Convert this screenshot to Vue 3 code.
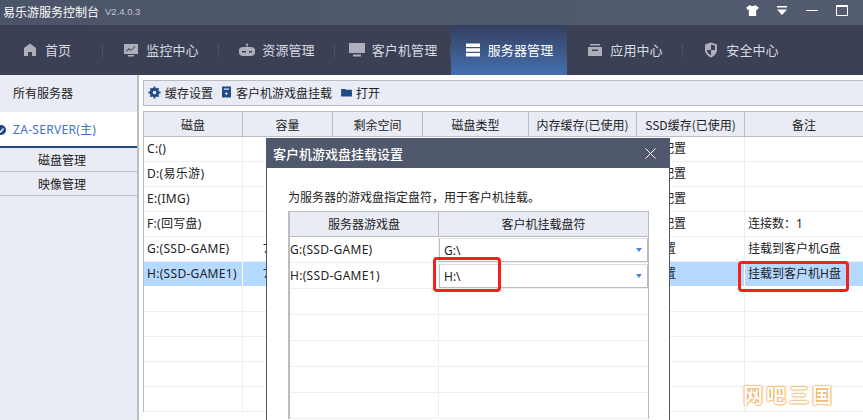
<script setup>
const nav = [
  { t: '首页', w: 103, i: 'home' },
  { t: '监控中心', w: 116, i: 'mon' },
  { t: '资源管理', w: 116, i: 'res' },
  { t: '客户机管理', w: 116, i: 'pc' },
  { t: '服务器管理', w: 116, i: 'srv', on: true },
  { t: '应用中心', w: 116, i: 'app' },
  { t: '安全中心', w: 116, i: 'sec' }
]
const cols = [
  { t: '磁盘', w: 99 }, { t: '容量', w: 90 }, { t: '剩余空间', w: 90 }, { t: '磁盘类型', w: 106 },
  { t: '内存缓存(已使用)', w: 108 }, { t: 'SSD缓存(已使用)', w: 108 }, { t: '备注', w: 119 }
]
const rows = [
  ['C:()', '', '', '', '', '未配置', ''],
  ['D:(易乐游)', '', '', '', '', '未配置', ''],
  ['E:(IMG)', '', '', '', '', '未配置', ''],
  ['F:(回写盘)', '', '', '', '', '未配置', '连接数：1'],
  ['G:(SSD-GAME)', '7', '', '', '', '未配置', '挂载到客户机G盘'],
  ['H:(SSD-GAME1)', '7', '', '', '', '未配置', '挂载到客户机H盘'],
  ['', '', '', '', '', '', ''], ['', '', '', '', '', '', ''], ['', '', '', '', '', '', ''],
  ['', '', '', '', '', '', ''], ['', '', '', '', '', '', '']
]
const mrows = [['G:(SSD-GAME)', 'G:\\'], ['H:(SSD-GAME1)', 'H:\\'], ['', ''], ['', ''], ['', ''], ['', ''], ['', '']]
</script>

<template>
  <div class="app">
    <header class="title">
      <span class="tname">易乐游服务控制台</span><span class="ver">V2.4.0.3</span>
      <div class="winbtns">
        <svg width="13" height="11" viewBox="0 0 14 12"><path d="M4 0 L5.500 1 H8.500 L10 0 L14 3 L12 5.500 L11 5 V12 H3 V5 L2 5.500 L0 3 Z" fill="#fff"/></svg>
        <svg width="10" height="9" viewBox="0 0 10 9"><path d="M0 0H10V1.500H0Z M0 3.500H10L5 9Z" fill="#fff"/></svg>
        <i class="min"></i>
        <i class="max"></i>
      </div>
    </header>
    <nav class="nav">
      <div v-for="n in nav" :key="n.t" class="navitem" :class="{ on: n.on }" :style="{ width: n.w + 'px' }">
        <svg class="nicon" width="16" height="16" viewBox="0 0 16 16">
          <path v-if="n.i === 'home'" d="M8 1.500 L14 6 V14 H10 V10 H6 V14 H2 V6 Z" fill="currentColor"/>
          <path v-else-if="n.i === 'mon'" fill-rule="evenodd" d="M1 2H15V12H1Z M3 9L6 6L8 8L12 4L12.500 4.500L8 9L6 7.500L4 9.500Z M5 13H11V14.500H5Z" fill="currentColor"/>
          <path v-else-if="n.i === 'res'" fill-rule="evenodd" d="M8 1.500A1 1 0 0 1 8.500 3.500V5H12A4 4 0 0 1 12 14H4A4 4 0 0 1 4 5H7.500V3.500A1 1 0 0 1 8 1.500Z M3 9V10.500H7V9Z M10 9V10.500H13V9Z" fill="currentColor"/>
          <path v-else-if="n.i === 'pc'" d="M0 1H16V11H0Z M4 12.500H12V14.500H4Z" fill="currentColor"/>
          <path v-else-if="n.i === 'srv'" d="M1 1.500H15V5H1Z M1 6.300H15V9.700H1Z M1 11H15V14.500H1Z" fill="currentColor"/>
          <path v-else-if="n.i === 'app'" fill-rule="evenodd" d="M3 2H13V3.500H3Z M1 5H15V14H1Z M5 7.500V9H11V7.500Z" fill="currentColor"/>
          <path v-else d="M8 0.500L14 2.500V8C14 11.500 11 14 8 15.500C5 14 2 11.500 2 8V2.500Z M8 2.500V8H12V3.800Z M8 8V13.300C6 12.300 4 10.500 4 8Z" fill="currentColor" fill-rule="evenodd"/>
        </svg>
        <span>{{ n.t }}</span>
      </div>
    </nav>
    <main class="main">
      <aside class="side">
        <div class="all">所有服务器</div>
        <div class="server">
          <svg class="dot" width="10" height="10" viewBox="0 0 10 10"><circle cx="5" cy="5" r="5" fill="#1f4a86"/><path d="M2.500 5L4.500 7L7.500 3.500" fill="none" stroke="#fff" stroke-width="1.200"/></svg>
          <span>ZA-SERVER(主)</span>
        </div>
        <div class="sub">磁盘管理</div>
        <div class="sub">映像管理</div>
      </aside>
      <section class="content">
        <div class="toolbar">
          <span class="tool">
            <svg width="13" height="13" viewBox="0 0 14 14"><circle cx="7" cy="7" r="3.500" fill="none" stroke="#1f4a86" stroke-width="3"/><path d="M7 0.500V3 M7 11V13.500 M0.500 7H3 M11 7H13.500 M2.500 2.500L4 4 M10 10L11.500 11.500 M11.500 2.500L10 4 M4 10L2.500 11.500" stroke="#1f4a86" stroke-width="2"/></svg>
            缓存设置
          </span>
          <span class="tool t2">
            <svg width="9" height="12" viewBox="0 0 10 12"><path fill-rule="evenodd" d="M0 0H10V12H0Z M2 2V3.500H8V2Z M4.300 6V7.300H3V8.300H4.300V9.600H5.300V8.300H6.600V7.300H5.300V6Z" fill="#1f4a86"/></svg>
            客户机游戏盘挂载
          </span>
          <span class="tool t3">
            <svg width="11" height="9" viewBox="0 0 12 10"><path d="M0 1H4.500L5.500 2H12V9.500H0Z" fill="#1f4a86"/></svg>
            打开
          </span>
        </div>
        <div class="table">
          <div class="thead">
            <div v-for="c in cols" :key="c.t" class="th" :style="{ width: c.w + 'px' }">{{ c.t }}</div>
          </div>
          <div v-for="(r, ri) in rows" :key="ri" class="tr" :class="{ sel: ri === 5 }">
            <div v-for="(c, ci) in cols" :key="ci" class="td" :class="{ first: ci === 0, num: ci === 1, cfg: ci === 5 && ri < 4, cfg2: ci === 5 && ri >= 4 }" :style="{ width: c.w + 'px' }">{{ r[ci] }}</div>
          </div>
        </div>
      </section>
    </main>

    <div class="modal">
      <div class="mtitle"><span>客户机游戏盘挂载设置</span>
        <svg width="11" height="11" viewBox="0 0 11 11"><path d="M0.500 0.500L10.500 10.500M10.500 0.500L0.500 10.500" stroke="#fff" stroke-width="1"/></svg>
      </div>
      <p class="desc">为服务器的游戏盘指定盘符，用于客户机挂载。</p>
      <div class="mtable">
        <div class="mhead"><div class="mc1">服务器游戏盘</div><div class="mc2">客户机挂载盘符</div></div>
        <div v-for="(m, i) in mrows" :key="i" class="mrow">
          <div class="mc1">{{ m[0] }}</div>
          <div class="mc2"><div v-if="m[1]" class="select"><span>{{ m[1] }}</span><i class="caret"></i></div></div>
        </div>
      </div>
    </div>

    <i class="red red1"></i>
    <i class="red red2"></i>
    <div class="mark">网吧三国</div>
  </div>
</template>

<style scoped>
.app { position: relative; width: 863px; height: 420px; overflow: hidden; background: #fff; font-family: "Noto Sans CJK SC", "Liberation Sans", sans-serif; font-size: 12px; color: #222; }
.title { height: 25px; display: flex; align-items: center; padding-left: 3px; color: #fff; background: linear-gradient(90deg, #4c5469, #525b70); }
.tname { font-size: 12px; margin-bottom: 2px; }
.ver { margin-left: 6px; margin-bottom: 2px; font-size: 9.500px; color: #c3c8d3; font-family: "Liberation Sans", sans-serif; }
.winbtns { margin-left: auto; display: flex; align-items: center; gap: 18px; padding-right: 15px; padding-bottom: 4px; }
.min { width: 12px; height: 1px; background: #fff; margin-left: 1px; }
.max { width: 12px; height: 11px; box-sizing: border-box; border: 1px solid #fff; border-top-width: 2px; }
.nav { height: 50px; display: flex; background: #3b4055; }
.navitem { position: relative; display: flex; align-items: center; justify-content: center; gap: 7px; color: #d9dbe2; font-size: 13px; letter-spacing: 0.100px; box-sizing: border-box; padding-bottom: 1px; }
.navitem:first-child { padding-right: 10px; }
.navitem + .navitem::before { content: ""; position: absolute; left: -1px; top: 19px; height: 14px; width: 1px; background: #4d5266; }
.navitem.on { color: #fff; background: linear-gradient(180deg, #353f5f, #4470ae); }
.nicon { color: #adb0ba; }
.on .nicon { color: #fff; }
.main { display: flex; height: 345px; }
.side { width: 137px; background: #e9ecf5; border-right: 2px solid #bbbcc4; flex: none; }
.all { height: 37px; box-sizing: border-box; padding: 0 0 2px 13px; display: flex; align-items: center; }
.server { height: 36px; box-sizing: border-box; display: flex; align-items: center; background: #fff; color: #3f73c9; border-bottom: 2px solid #1f4a86; padding-left: 13px; position: relative; font-family: "Noto Sans", "Noto Sans CJK SC", sans-serif; font-size: 12px; letter-spacing: 0.300px; }
.dot { position: absolute; left: -4px; top: 13px; }
.sub { height: 24px; box-sizing: border-box; border-bottom: 1px solid #bbbcc4; display: flex; align-items: center; padding-left: 38px; }
.content { flex: 1; padding: 5px 0 0 4px; min-width: 0; }
.toolbar { height: 26px; box-sizing: border-box; display: flex; align-items: center; background: #e9ecf5; border: 1px solid #bbbcc4; border-right: 0; padding: 0 0 2px 4px; }
.tool { display: inline-flex; align-items: center; gap: 4px; }
.t2 { margin-left: 9px; gap: 5px; }
.t3 { margin-left: 9px; gap: 4px; }
.table { margin-top: 5px; border-left: 1px solid #bbbcc4; }
.thead { display: flex; height: 26px; background: #e9ecf5; border-top: 1px solid #bbbcc4; border-bottom: 1px solid #bbbcc4; box-sizing: border-box; }
.th { box-sizing: border-box; border-right: 1px solid #bbbcc4; display: flex; align-items: center; justify-content: center; flex: none; }
.tr { display: flex; height: 25px; }
.td { box-sizing: border-box; flex: none; height: 25px; line-height: 24px; padding-left: 3px; border-right: 1px solid #eceef5; border-bottom: 1px solid #eceef5; font-family: "Noto Sans", "Noto Sans CJK SC", sans-serif; font-size: 12px; white-space: nowrap; }
.td.first { letter-spacing: 0.300px; }
.td.num { padding-left: 20px; }
.td.cfg { text-align: right; padding-right: 58px; }
.td.cfg2 { text-align: right; padding-right: 69px; }
.sel .td { background: #b5d9ff; border-color: #fff; }
.modal { position: absolute; left: 266px; top: 138px; width: 402px; height: 290px; background: #fff; border-left: 1px solid #4f586c; border-right: 1px solid #4f586c; }
.mtitle { height: 30px; background: #4f586c; color: #fff; display: flex; align-items: center; justify-content: space-between; padding: 0 13px 0 6px; font-size: 13px; font-weight: 500; }
.desc { margin: 20px 0 0 21px; height: 18px; line-height: 18px; font-size: 12px; }
.mtable { margin: 5px 0 0 21px; width: 358px; border: 1px solid #bbbcc4; border-bottom: 0; border-left-width: 2px; }
.mhead { display: flex; height: 25px; box-sizing: border-box; background: #e9ecf5; border-bottom: 1px solid #bbbcc4; }
.mhead > div { display: flex; align-items: center; justify-content: center; padding-bottom: 1px; }
.mc1 { width: 149px; flex: none; box-sizing: border-box; border-right: 1px solid #bbbcc4; }
.mc2 { flex: 1; }
.mrow { display: flex; height: 26px; box-sizing: border-box; border-bottom: 1px solid #eceef5; font-family: "Noto Sans", "Noto Sans CJK SC", sans-serif; font-size: 12px; }
.mrow .mc1 { border-right-color: #eceef5; line-height: 25px; letter-spacing: 0.300px; }
.select { margin-top: 1px; height: 24px; box-sizing: border-box; border: 1px solid #bbbcc4; border-top-color: #ddd; display: flex; align-items: center; justify-content: space-between; padding: 0 5px 0 4px; }
.caret { width: 0; height: 0; border-left: 3px solid transparent; border-right: 3px solid transparent; border-top: 4px solid #4a86e0; }
.red { position: absolute; box-sizing: border-box; border: 3px solid #f5201a; border-radius: 4px; }
.red1 { left: 433px; top: 257px; width: 68px; height: 35px; }
.red2 { left: 738px; top: 261px; width: 111px; height: 31px; }
.mark { position: absolute; left: 743px; top: 384px; width: 92px; font-size: 20px; line-height: 22px; letter-spacing: 3px; color: #fff; white-space: nowrap; text-shadow: 0 0 2px #e99a30, 0 0 2px #e99a30, 0 0 1px #e99a30; font-weight: 700; }
</style>
